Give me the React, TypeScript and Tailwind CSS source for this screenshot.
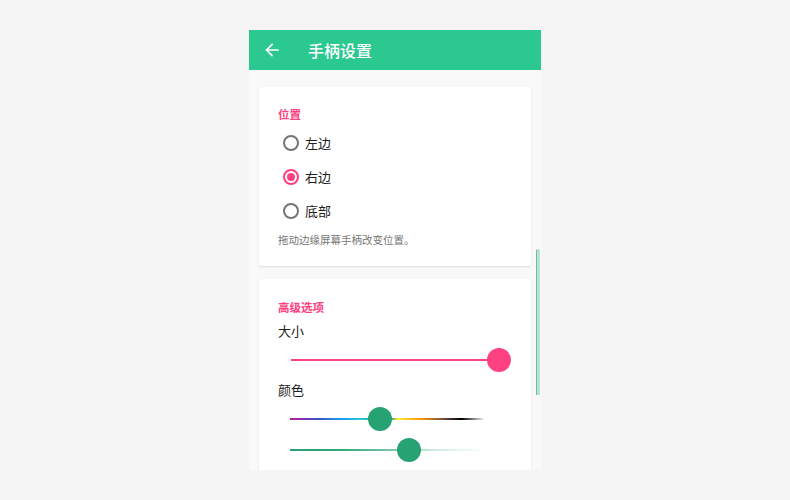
import React from "react";

const font = { fontFamily: '"Noto Sans CJK SC", "Noto Sans", sans-serif' };

function Radio({ label, checked }: { label: string; checked?: boolean }) {
  return (
    <div className="flex h-[34px] items-center">
      <div
        className={
          "ml-[5px] flex h-[16px] w-[16px] items-center justify-center rounded-full border-2 " +
          (checked ? "border-[#ff4081]" : "border-[#757575]")
        }
      >
        {checked && <div className="h-[8px] w-[8px] rounded-full bg-[#ff4081]" />}
      </div>
      <span className="ml-[6px] text-[13px] leading-[18px] text-[#212121]">{label}</span>
    </div>
  );
}

export default function App() {
  return (
    <div className="flex h-[500px] w-[790px] justify-center bg-[#f5f5f5] pt-[30px]" style={font}>
      <div className="relative h-[440px] w-[292px] overflow-hidden bg-[#f9f9f9]">
        <div className="flex h-[40px] items-center bg-[#2bc890]">
          <svg className="ml-[13px]" width="20" height="20" viewBox="0 0 24 24" fill="#ffffff">
            <path d="M20 11H7.83l5.59-5.59L12 4l-8 8 8 8 1.41-1.41L7.83 13H20v-2z" />
          </svg>
          <span className="ml-[26px] text-[16px] font-medium leading-[20px] text-white">手柄设置</span>
        </div>

        <div className="flex flex-col gap-[13px] px-[10px] pt-[17px]">
          <div className="rounded-[2px] bg-white px-[19px] pb-[19px] pt-[19px] shadow-[0_1px_2px_rgba(0,0,0,0.12)]">
            <div className="h-[16px] text-[11.5px] font-bold leading-[16px] text-[#ff4081]">位置</div>
            <div className="mt-[4px] flex flex-col">
              <Radio label="左边" />
              <Radio label="右边" checked />
              <Radio label="底部" />
            </div>
            <div className="mt-[5px] text-[10.5px] leading-[14px] text-[#757575]">拖动边缘屏幕手柄改变位置。</div>
          </div>

          <div className="h-[200px] rounded-[2px] bg-white px-[19px] pt-[20px] shadow-[0_1px_2px_rgba(0,0,0,0.12)]">
            <div className="h-[16px] text-[11.5px] font-bold leading-[16px] text-[#ff4081]">高级选项</div>
            <div className="mt-[7px] text-[13px] leading-[18px] text-[#212121]">大小</div>
            <div className="relative ml-[13px] mt-[8px] flex h-[24px] w-[220px] items-center">
              <div className="h-[2px] w-[208px] bg-[#ff4081]" />
              <div className="absolute left-[196px] top-0 h-[24px] w-[24px] rounded-full bg-[#ff4081]" />
            </div>
            <div className="mt-[9px] text-[13px] leading-[18px] text-[#212121]">颜色</div>
            <div className="relative ml-[12px] mt-[8px] flex h-[24px] w-[200px] items-center">
              <div className="h-[2px] w-[195px] bg-[linear-gradient(to_right,#b0208f_0%,#9c27b0_5%,#3f51b5_14%,#2196f3_25%,#26c6da_36%,#26a17a_46%,#26a17a_52%,#ffeb3b_55%,#ff9800_67%,#795548_78%,#000000_88%,rgba(0,0,0,0)_100%)]" />
              <div className="absolute left-[78px] top-0 h-[24px] w-[24px] rounded-full bg-[#27a273]" />
            </div>
            <div className="relative ml-[12px] mt-[7px] flex h-[24px] w-[200px] items-center">
              <div className="h-[2px] w-[195px] bg-[linear-gradient(to_right,#27a273_0%,#2fa677_25%,#7fcbad_55%,#cdeee0_75%,rgba(230,248,240,0)_100%)]" />
              <div className="absolute left-[107px] top-0 h-[24px] w-[24px] rounded-full bg-[#27a273]" />
            </div>
          </div>
        </div>

        <div className="absolute right-[1px] top-[219px] h-[146px] w-[4px] rounded-t-[2px] border-l border-[#7fb5a2] bg-[#b4e2d4]" />
      </div>
    </div>
  );
}
